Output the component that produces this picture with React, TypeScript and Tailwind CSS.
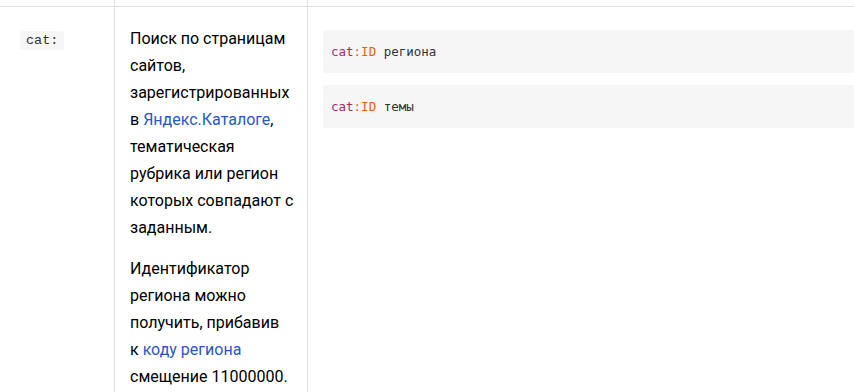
const cellBase = 'border-r border-[#e0e0e0]'

function CodeLine({ rest }: { rest: string }) {
  return (
    <div className="bg-[#f6f6f6] rounded-[2px] px-2 py-[14px] font-['DejaVu_Sans_Mono','Liberation_Mono',monospace] text-[12.5px] leading-[15px] text-[#333] whitespace-pre">
      <span className="text-[#a52a6a]">cat</span>
      <span className="text-[#e4600e]">:ID</span> {rest}
    </div>
  )
}

export default function App() {
  return (
    <div className="bg-white w-[854px] h-[392px] overflow-hidden font-['Roboto','Noto_Sans',sans-serif] text-black">
      <div className="grid grid-cols-[115px_193px_1fr]">
        {/* tail of previous row */}
        <div className={`h-[6px] ${cellBase}`} />
        <div className={`h-[6px] ${cellBase}`} />
        <div className="h-[6px]" />

        <div className={`${cellBase} border-t border-t-[#e0e0e0] pl-5 pt-[24px] h-[400px] flex items-start`}>
          <code className="block bg-[#f6f6f6] rounded-[3px] px-[6px] font-['Liberation_Mono',monospace] text-[13.5px] leading-[19px] text-[#333]">
            cat:
          </code>
        </div>
        <div className={`${cellBase} border-t border-t-[#e0e0e0] pl-[15px] pr-3 pt-[18px] text-[16px] leading-[27px]`}>
          <p>
            Поиск по страницам сайтов, зарегистрированных в{' '}
            <a href="#" className="text-[#2b56c6]">Яндекс.Каталоге</a>, тематическая рубрика или регион которых совпадают с заданным.
          </p>
          <p className="mt-[14px]">
            Идентификатор региона можно получить, прибавив
            <br />к <a href="#" className="text-[#2b56c6]">коду региона</a> смещение 11000000.
          </p>
        </div>
        <div className="border-t border-t-[#e0e0e0] pl-[15px] pt-[23px] flex flex-col gap-3">
          <CodeLine rest="региона" />
          <CodeLine rest="темы" />
        </div>
      </div>
    </div>
  )
}
